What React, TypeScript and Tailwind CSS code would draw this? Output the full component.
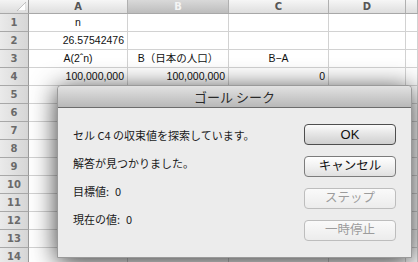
import React from "react";

const cellFont = "font-['Liberation_Sans','Noto_Sans_CJK_JP',sans-serif]";

type Cell = { t?: string; align?: "l" | "c" | "r" };

const rows: Cell[][] = [
  [{ t: "n", align: "c" }, {}, {}, {}, {}],
  [{ t: "26.57542476", align: "r" }, {}, {}, {}, {}],
  [{ t: "A(2ˆn)", align: "c" }, { t: "B（日本の人口）", align: "c" }, { t: "B−A", align: "c" }, {}, {}],
  [{ t: "100,000,000", align: "r" }, { t: "100,000,000", align: "r" }, { t: "0", align: "r" }, {}, {}],
];

const colW = ["w-[99px]", "w-[101px]", "w-[100px]", "w-[77px]", "flex-1"];

function RowHeader({ n }: { n: number }) {
  return (
    <div className="w-[29px] shrink-0 h-full border-r border-b border-r-[#9a9a9a] border-b-[#a8a8a8] bg-gradient-to-r from-[#eaeaea] to-[#d6d6d6] flex items-center justify-center font-['DejaVu_Sans',sans-serif] font-bold text-[10px] text-[#6a6a6a]">
      {n}
    </div>
  );
}

function Btn({ label, kind }: { label: string; kind: "default" | "normal" | "disabled" }) {
  const cls =
    kind === "default"
      ? "border-[#4e4e4e] text-[#111] bg-gradient-to-b from-[#fbfbfb] via-[#e4e4e4] to-[#cfcfcf] text-[13px]"
      : kind === "normal"
      ? "border-[#7c7c7c] text-[#111] bg-gradient-to-b from-[#ffffff] via-[#f1f1f1] to-[#e0e0e0] text-[12.5px]"
      : "border-[#bdbdbd] text-[#9c9c9c] bg-gradient-to-b from-[#fafafa] to-[#ececec] text-[12.5px]";
  return (
    <div
      className={`h-[21px] w-[92px] rounded-[4px] border flex items-center justify-center leading-none ${cls} font-['Liberation_Sans','Noto_Sans_CJK_JP',sans-serif]`}
    >
      {label}
    </div>
  );
}

export default function App() {
  const totalRows = 14;
  return (
    <div className={`relative w-[418px] h-[262px] overflow-hidden bg-white ${cellFont}`}>
      {/* column header */}
      <div className="flex h-[14px] border-b border-[#a8a8a8]">
        <div className="w-[29px] shrink-0 h-full border-r border-[#9a9a9a] bg-gradient-to-b from-[#f4f4f4] to-[#dcdcdc] relative">
          <svg className="absolute right-[2px] bottom-[2px]" width="9" height="9" viewBox="0 0 9 9">
            <polygon points="9,0 9,9 0,9" fill="#ffffff" stroke="#b5b5b5" strokeWidth="0.8" />
          </svg>
        </div>
        {["A", "B", "C", "D", ""].map((l, i) => (
          <div
            key={i}
            className={`${colW[i]} shrink-0 h-full border-r border-[#b0b0b0] flex items-center justify-center font-['DejaVu_Sans',sans-serif] font-bold text-[10px] ${
              l === "B"
                ? "bg-gradient-to-b from-[#d9d9d9] to-[#bdbdbd] text-[#f4f4f4]"
                : "bg-gradient-to-b from-[#f6f6f6] to-[#dedede] text-[#555]"
            }`}
          >
            {l}
          </div>
        ))}
      </div>
      {/* rows */}
      {Array.from({ length: totalRows }).map((_, r) => (
        <div key={r} className="flex h-[18px]">
          <RowHeader n={r + 1} />
          {colW.map((w, c) => {
            const cell = rows[r]?.[c] ?? {};
            const al =
              cell.align === "r" ? "justify-end pr-[3px]" : cell.align === "c" ? "justify-center" : "justify-start pl-[3px]";
            return (
              <div
                key={c}
                className={`${w} shrink-0 h-full border-r border-b border-[#d2d2d2] flex items-center ${al} text-[10.5px] text-[#111] whitespace-nowrap overflow-hidden`}
              >
                {cell.t}
              </div>
            );
          })}
        </div>
      ))}

      {/* dialog */}
      <div className="absolute left-[57px] top-[85px] w-[355px] h-[173px] flex flex-col bg-[#ececec] border border-[#9a9a9a] rounded-t-[4px] shadow-[0_4px_26px_rgba(0,0,0,0.8)]">
        <div className="h-[22px] shrink-0 flex items-center justify-center rounded-t-[4px] bg-gradient-to-b from-[#e2e2e2] to-[#b8b8b8] border-b border-[#6c6c6c] text-[13px] text-[#2a2a2a] font-['Noto_Sans_CJK_JP',sans-serif]">
          ゴール シーク
        </div>
        <div className="flex flex-1">
          <div className="flex-1 flex flex-col pl-[15px] pt-[19px] gap-[12px] text-[11px] text-[#1a1a1a] font-['Noto_Sans_CJK_JP',sans-serif]">
            <div className="h-[16px] leading-[16px] whitespace-nowrap">セル C4 の収束値を探索しています。</div>
            <div className="h-[16px] leading-[16px] whitespace-nowrap">解答が見つかりました。</div>
            <div className="h-[16px] leading-[16px] whitespace-nowrap">
              目標値:<span className="ml-[6px]">0</span>
            </div>
            <div className="h-[16px] leading-[16px] whitespace-nowrap">
              現在の値:<span className="ml-[6px]">0</span>
            </div>
          </div>
          <div className="w-[107px] shrink-0 flex flex-col pt-[16px] gap-[11px]">
            <Btn label="OK" kind="default" />
            <Btn label="キャンセル" kind="normal" />
            <Btn label="ステップ" kind="disabled" />
            <Btn label="一時停止" kind="disabled" />
          </div>
        </div>
      </div>
    </div>
  );
}
